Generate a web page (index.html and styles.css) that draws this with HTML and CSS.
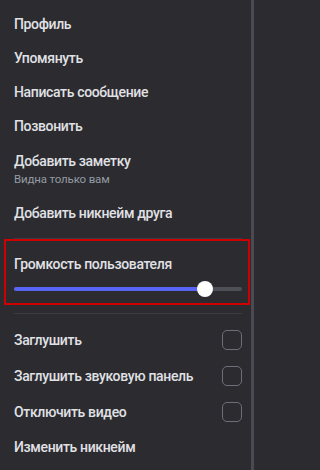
FILE: index.html
```html
<!DOCTYPE html>
<html lang="ru">
<head>
<meta charset="utf-8">
<link rel="stylesheet" href="styles.css">
</head>
<body>
<div class="frame">
  <div class="menu">
    <div class="item">Профиль</div>
    <div class="item">Упомянуть</div>
    <div class="item">Написать сообщение</div>
    <div class="item">Позвонить</div>
    <div class="item item-sub">
      <div class="label">Добавить заметку</div>
      <div class="sub">Видна только вам</div>
    </div>
    <div class="item">Добавить никнейм друга</div>
    <div class="sep"></div>
    <div class="volume">
      <div class="label">Громкость пользователя</div>
      <div class="slider">
        <div class="track"><div class="fill" style="width: 83.7%"></div></div>
        <div class="knob" style="left: 83.7%"></div>
      </div>
    </div>
    <div class="sep sep-after"></div>
    <div class="item item-check"><span>Заглушить</span><span class="box"></span></div>
    <div class="item item-check"><span>Заглушить звуковую панель</span><span class="box"></span></div>
    <div class="item item-check"><span>Отключить видео</span><span class="box"></span></div>
    <div class="item">Изменить никнейм</div>
  </div>
  <div class="scrollbar"></div>
</div>
</body>
</html>
```
FILE: styles.css
```css
html, body {
  margin: 0;
  padding: 0;
  background: #2b2b30;
}
body {
  width: 254px;
  height: 470px;
  overflow: hidden;
  font-family: Roboto, "Noto Sans", sans-serif;
  color: #e0e1e5;
}
.frame {
  display: flex;
  height: 470px;
}
.menu {
  flex: 1;
  padding: 7px 9px 0 14px;
}
.scrollbar {
  width: 3px;
  background: #4a4a52;
}
.item,
.volume .label {
  font-size: 14px;
  font-weight: 500;
  line-height: 18px;
  letter-spacing: -0.35px;
  white-space: nowrap;
}
.item {
  padding: 8px 0;
}
.item-sub {
  padding: 9px 0;
}
.sub {
  font-size: 11.5px;
  font-weight: 400;
  line-height: 16px;
  letter-spacing: -0.15px;
  margin-top: 1px;
  color: #949ba4;
}
.item-check {
  display: flex;
  align-items: center;
  justify-content: space-between;
  height: 20px;
}
.box {
  width: 18px;
  height: 18px;
  border: 1px solid #6d6f78;
  border-radius: 5px;
}
.sep {
  height: 1px;
  background: #3b3c42;
  margin-top: 8px;
}
.sep-after {
  margin-bottom: 8px;
}
.volume {
  margin: 0 -8px 0 -10px;
  border: 2px solid #d10000;
  padding: 14px 6px 6px 8px;
}
.slider {
  position: relative;
  height: 16px;
  margin-top: 8px;
  display: flex;
  align-items: center;
}
.track {
  flex: 1;
  height: 4px;
  border-radius: 2px;
  background: #4e5058;
  overflow: hidden;
}
.fill {
  height: 100%;
  background: #5865f2;
}
.knob {
  position: absolute;
  top: 0;
  width: 16px;
  height: 16px;
  margin-left: -8px;
  border-radius: 50%;
  background: #ffffff;
}
```
